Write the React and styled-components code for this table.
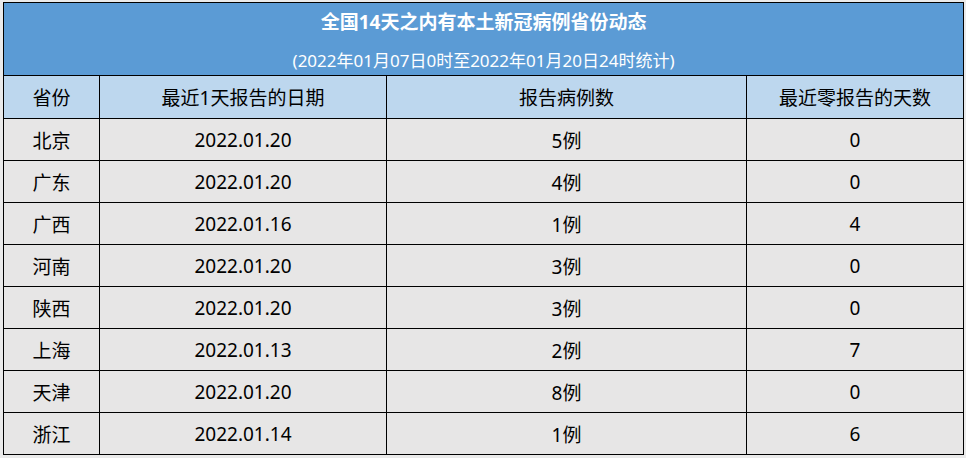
import styled, { createGlobalStyle } from "styled-components";

const GlobalStyle = createGlobalStyle`
  html, body {
    margin: 0;
    padding: 0;
    background: #eaeaea;
  }
  body {
    font-family: "Noto Sans", "Noto Sans CJK SC", sans-serif;
  }
`;

const Page = styled.div`
  padding: 2px 0 0 3px;
`;

const Table = styled.table`
  border-collapse: collapse;
  width: 960px;
  table-layout: fixed;
  background: #e7e6e6;
  border: 1px solid #000;
`;

const TitleCell = styled.th`
  background: #5b9bd5;
  color: #fff;
  height: 72px;
  padding: 0;
  text-align: center;
  vertical-align: top;
`;

const TitleMain = styled.div`
  font-size: 19px;
  font-weight: 700;
  line-height: 20px;
  margin-top: 9px;
`;

const TitleSub = styled.div`
  font-size: 17px;
  font-weight: 400;
  line-height: 20px;
  margin-top: 19px;
`;

const HeadCell = styled.th`
  background: #bdd7ee;
  border: 1px solid #000;
  height: 42px;
  padding: 0;
  font-size: 19px;
  font-weight: 400;
  color: #000;
  text-align: center;
`;

const Cell = styled.td`
  border: 1px solid #000;
  height: 41px;
  padding: 0;
  font-size: 19px;
  color: #000;
  text-align: center;
`;

const rows = [
  ["北京", "2022.01.20", "5例", "0"],
  ["广东", "2022.01.20", "4例", "0"],
  ["广西", "2022.01.16", "1例", "4"],
  ["河南", "2022.01.20", "3例", "0"],
  ["陕西", "2022.01.20", "3例", "0"],
  ["上海", "2022.01.13", "2例", "7"],
  ["天津", "2022.01.20", "8例", "0"],
  ["浙江", "2022.01.14", "1例", "6"],
];

const App = () => {
  return (
    <Page>
      <GlobalStyle />
      <Table>
        <colgroup>
          <col style={{ width: "96px" }} />
          <col style={{ width: "287px" }} />
          <col style={{ width: "360px" }} />
          <col style={{ width: "217px" }} />
        </colgroup>
        <thead>
          <tr>
            <TitleCell colSpan={4}>
              <TitleMain>全国14天之内有本土新冠病例省份动态</TitleMain>
              <TitleSub>(2022年01月07日0时至2022年01月20日24时统计)</TitleSub>
            </TitleCell>
          </tr>
          <tr>
            <HeadCell>省份</HeadCell>
            <HeadCell>最近1天报告的日期</HeadCell>
            <HeadCell>报告病例数</HeadCell>
            <HeadCell>最近零报告的天数</HeadCell>
          </tr>
        </thead>
        <tbody>
          {rows.map((r) => (
            <tr key={r[0]}>
              {r.map((v, i) => (
                <Cell key={i}>{v}</Cell>
              ))}
            </tr>
          ))}
        </tbody>
      </Table>
    </Page>
  );
};

export default App;
